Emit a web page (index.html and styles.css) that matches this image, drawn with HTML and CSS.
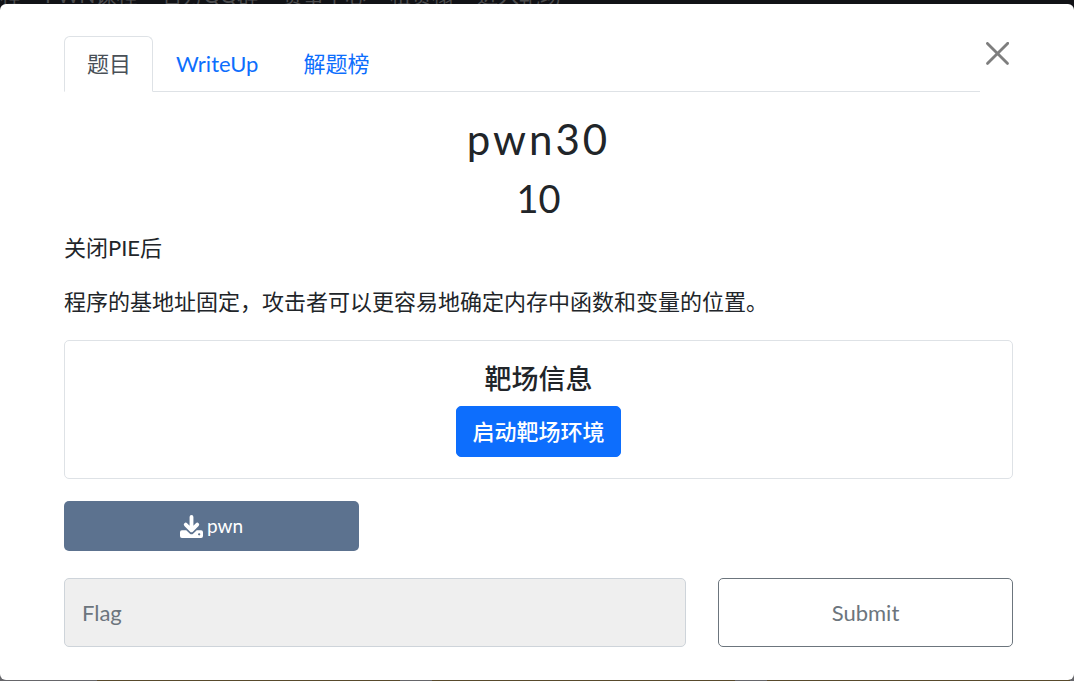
FILE: index.html
```
<!DOCTYPE html>
<html lang="zh-CN">
<head>
  <meta charset="UTF-8">
  <meta name="viewport" content="width=device-width,initial-scale=1.0">
  <title>pwn30</title>
  <link rel="stylesheet" href="styles.css">
</head>
<body>

  <!-- page behind the modal -->
  <div class="backdrop" aria-hidden="true">
    <div class="site-nav">
      <span>课程</span>
      <span>PWN课程</span>
      <span>官方QQ群</span>
      <span>赛事中心</span>
      <span>租赁榻</span>
      <span>进入靶场</span>
    </div>
    <div class="card-row">
      <div class="card"></div>
      <div class="card"></div>
      <div class="card"></div>
    </div>
  </div>

  <main class="modal" role="dialog" aria-labelledby="challenge-name">
    <div class="modal-top">
      <nav class="tabs">
        <a class="tab active" href="#challenge">题目</a>
        <a class="tab" href="#writeup">WriteUp</a>
        <a class="tab" href="#solves">解题榜</a>
      </nav>
      <button type="button" class="close" aria-label="Close">
        <svg viewBox="0 0 16 16"><path d="M.3.3a1 1 0 0 1 1.4 0L8 6.6 14.3.3a1 1 0 1 1 1.4 1.4L9.4 8l6.3 6.3a1 1 0 0 1-1.4 1.4L8 9.4l-6.3 6.3a1 1 0 0 1-1.4-1.4L6.6 8 .3 1.7A1 1 0 0 1 .3.3z"/></svg>
      </button>
    </div>

    <h2 class="name" id="challenge-name">pwn30</h2>
    <h3 class="value">10</h3>

    <div class="desc">
      <p>关闭PIE后</p>
      <p>程序的基地址固定，攻击者可以更容易地确定内存中函数和变量的位置。</p>
    </div>

    <section class="target">
      <h5>靶场信息</h5>
      <button type="button" class="start">启动靶场环境</button>
    </section>

    <div class="files">
      <a class="file" href="#pwn">
        <svg viewBox="0 0 24 24">
          <path d="M12 2v11M6 10l6 6 6-6" fill="none" stroke="currentColor" stroke-width="4" stroke-linecap="round" stroke-linejoin="round"/>
          <path fill="currentColor" fill-rule="evenodd" d="M2 16h4.500l3.600 3.300a2.800 2.800 0 0 0 3.800 0L17.500 16H22a2 2 0 0 1 2 2v4a2 2 0 0 1-2 2H2a2 2 0 0 1-2-2v-4a2 2 0 0 1 2-2zm18 3a1.200 1.200 0 1 0 0 2.400 1.200 1.200 0 0 0 0-2.400z"/>
        </svg>
        <span>pwn</span>
      </a>
    </div>

    <form class="answer">
      <input type="text" name="flag" placeholder="Flag" aria-label="Flag">
      <button type="submit">Submit</button>
    </form>
  </main>

</body>
</html>
```

FILE: styles.css
```
:root {
  --blue: #0d6efd;
  --slate: #5c728f;
  --gray: #6c757d;
  --line: #dee2e6;
  --text: #212529;
}
* {
  box-sizing: border-box;
}
body {
  margin: 0;
  padding-top: 4px;
  min-height: 100vh;
  position: relative;
  overflow: hidden;
  background: #111216;
  color: var(--text);
  font-family: Lato, "Noto Sans CJK SC", sans-serif;
  font-size: 22px;
  line-height: 32px;
}
h2, h3, h5, p {
  margin: 0;
  font-weight: 400;
}
button, input {
  font: inherit;
}

/* dimmed page */
.backdrop {
  position: absolute;
  inset: 0;
  display: flex;
  flex-direction: column;
  justify-content: space-between;
  background: linear-gradient(#111216 50%, #66666a 50%);
}
.site-nav {
  display: flex;
  gap: 24px;
  margin-top: -21px;
  margin-left: -21px;
  color: #4c4c4e;
  font-size: 21px;
  white-space: nowrap;
}
.card-row {
  display: grid;
  grid-template-columns: repeat(3, 1fr);
  gap: 32px;
  padding: 0 4px 0 97px;
}
.card {
  height: 8px;
  background: #584a2c;
}

.modal {
  position: relative;
  padding: 32px 61px 33px 64px;
  background: #fff;
  border-radius: 6px;
}
.modal-top {
  display: flex;
  align-items: flex-start;
}
.tabs {
  flex: 1;
  display: flex;
  border-bottom: 1px solid var(--line);
}
.tab {
  padding: 11px 21px 11px 22px;
  margin-bottom: -1px;
  border: 1px solid transparent;
  border-radius: 6px 6px 0 0;
  color: var(--blue);
  text-decoration: none;
}
.tab.active {
  border-color: var(--line) var(--line) #fff;
  background: #fff;
  color: #495057;
}
.close {
  width: 33px;
  height: 33px;
  padding: 6px 4px 4px 6px;
  border: 0;
  background: none;
  opacity: 0.5;
  cursor: pointer;
}
.close svg {
  display: block;
  width: 23px;
  height: 23px;
}

.name {
  margin-top: 21px;
  font-size: 42px;
  line-height: 52px;
  letter-spacing: 3px;
  text-align: center;
}
.value {
  margin-top: 10px;
  font-size: 38px;
  line-height: 46px;
  text-align: center;
}
.desc {
  display: grid;
  gap: 22px;
  margin-top: 11px;
}

.target {
  display: flex;
  flex-direction: column;
  align-items: center;
  margin-top: 22px;
  padding: 22px 21px 21px;
  border: 1px solid var(--line);
  border-radius: 5px;
}
.target h5 {
  margin-bottom: 11px;
  font-size: 27px;
  font-weight: 500;
  line-height: 32px;
}
.start {
  height: 51px;
  padding: 0 15px;
  border: 1px solid var(--blue);
  border-radius: 5px;
  background: var(--blue);
  color: #fff;
  font-weight: 500;
  cursor: pointer;
}

.files,
.answer {
  display: grid;
  grid-template-columns: 295px;
  column-gap: 32px;
}
.files {
  margin-top: 22px;
}
.file {
  display: flex;
  align-items: center;
  justify-content: center;
  gap: 4px;
  height: 50px;
  border-radius: 5px;
  background: var(--slate);
  color: #fff;
  font-size: 19px;
  text-decoration: none;
}
.file svg {
  width: 23px;
  height: 23px;
}
.answer {
  grid-template-columns: 1fr 295px;
  margin-top: 27px;
}
.answer input,
.answer button {
  min-width: 0;
  height: 69px;
  border: 1px solid #ced4da;
  border-radius: 5px;
}
.answer input {
  padding: 0 17px;
  background: #efefef;
}
.answer input::placeholder {
  color: var(--gray);
  opacity: 1;
}
.answer button {
  border-color: var(--gray);
  background: #fff;
  color: var(--gray);
  cursor: pointer;
}
```
